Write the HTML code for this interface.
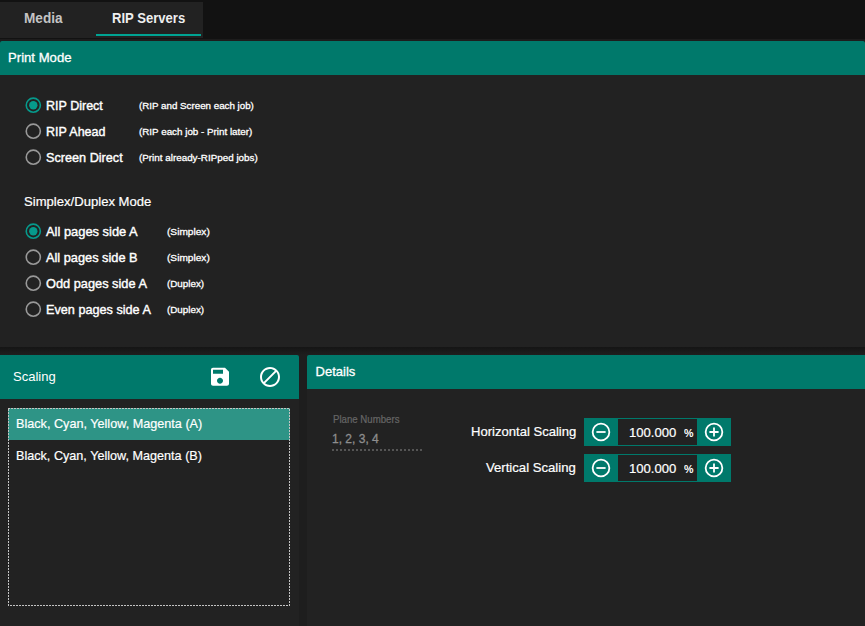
<!DOCTYPE html>
<html><head><meta charset="utf-8">
<style>
*{box-sizing:border-box;margin:0;padding:0}
html,body{width:865px;height:626px;overflow:hidden;background:#121212;font-family:"Liberation Sans",sans-serif;color:#fff}
.a{position:absolute}
.t,.tab{position:absolute;white-space:nowrap;color:#fff}
.m{-webkit-text-stroke-width:0.4px}
.m3{-webkit-text-stroke-width:0.3px}
.m2{-webkit-text-stroke-width:0.2px}
.teal{background:#00796b}
</style></head><body>
<div class="a" style="left:0;top:355px;width:865px;height:271px;background:#1e1e1e"></div>
<div class="a" style="left:0;top:2px;width:203px;height:36px;background:#222"></div>
<div class="a" style="left:96px;top:34px;width:105px;height:2px;background:#00a393"></div>
<div class="a" style="left:0;top:39px;width:865px;height:2px;background:#1d1c1c"></div>
<div class="a" style="left:0;top:347px;width:865px;height:8px;background:linear-gradient(#151515,#1e1e1e)"></div>
<div class="a" style="left:0;top:41px;width:865px;height:306px;background:#222;border-radius:2px 2px 0 0"></div>
<div class="a teal" style="left:0;top:41px;width:865px;height:34px;border-radius:2px 2px 0 0"></div>
<div class="a" style="left:0;top:355px;width:299px;height:271px;background:#222;border-radius:0 2px 0 0"></div>
<div class="a teal" style="left:0;top:355px;width:299px;height:44px;border-radius:0 2px 0 0"></div>
<div class="a" style="left:307px;top:355px;width:558px;height:271px;background:#222;border-radius:2px 0 0 0"></div>
<div class="a teal" style="left:307px;top:355px;width:558px;height:34px;border-radius:2px 0 0 0"></div>
<div class="a" style="left:8px;top:408px;width:282px;height:32px;background:#2e9486"></div>
<div class="a" style="left:8px;top:408px;width:282px;height:1px;background:repeating-linear-gradient(90deg,#c4c4c4 0 2px,transparent 2px 3px)"></div>
<div class="a" style="left:8px;top:605px;width:282px;height:1px;background:repeating-linear-gradient(90deg,#c4c4c4 0 1px,transparent 1px 2px,#c4c4c4 2px 3px)"></div>
<div class="a" style="left:8px;top:408px;width:1px;height:198px;background:repeating-linear-gradient(180deg,transparent 0 1px,#c4c4c4 1px 3px)"></div>
<div class="a" style="left:289px;top:408px;width:1px;height:198px;background:repeating-linear-gradient(180deg,transparent 0 1px,#c4c4c4 1px 3px)"></div>
<svg class="a" style="left:208px;top:364px" width="24" height="26" viewBox="0 0 24 26"><path fill="#fff" transform="translate(0,0.7)" d="M17 3H5c-1.110 0-2 .9-2 2v14c0 1.100.890 2 2 2h14c1.100 0 2-.9 2-2V7l-4-4zm-5 16c-1.660 0-3-1.340-3-3s1.340-3 3-3 3 1.340 3 3-1.340 3-3 3zm3-10H5V5h10v4z"/></svg>
<svg class="a" style="left:258px;top:365px" width="24" height="24" viewBox="0 0 24 24"><path fill="#fff" d="M12 2C6.480 2 2 6.480 2 12s4.480 10 10 10 10-4.480 10-10S17.520 2 12 2zM4 12c0-4.420 3.580-8 8-8 1.850 0 3.550.63 4.900 1.690L5.690 16.900C4.630 15.550 4 13.850 4 12zm8 8c-1.850 0-3.550-.63-4.900-1.690L18.310 7.100C19.370 8.450 20 10.150 20 12c0 4.420-3.580 8-8 8z"/></svg>
<div class="a" style="left:332px;top:449px;width:90px;height:2px;background:repeating-linear-gradient(90deg,#555 0 2px,transparent 2px 4px)"></div>
<svg class="a" style="left:23px;top:95px" width="20" height="20" viewBox="0 0 20 20"><circle cx="10.30" cy="10.20" r="7.050" fill="none" stroke="#069a8c" stroke-width="1.600"/><circle cx="10.30" cy="10.20" r="4.200" fill="#069a8c"/></svg>
<svg class="a" style="left:23px;top:121px" width="20" height="20" viewBox="0 0 20 20"><circle cx="10.30" cy="10.20" r="7.050" fill="none" stroke="#999" stroke-width="1.600"/></svg>
<svg class="a" style="left:23px;top:147px" width="20" height="20" viewBox="0 0 20 20"><circle cx="10.30" cy="10.20" r="7.050" fill="none" stroke="#999" stroke-width="1.600"/></svg>
<svg class="a" style="left:23px;top:221px" width="20" height="20" viewBox="0 0 20 20"><circle cx="10.30" cy="10.20" r="7.050" fill="none" stroke="#069a8c" stroke-width="1.600"/><circle cx="10.30" cy="10.20" r="4.200" fill="#069a8c"/></svg>
<svg class="a" style="left:23px;top:247px" width="20" height="20" viewBox="0 0 20 20"><circle cx="10.30" cy="10.20" r="7.050" fill="none" stroke="#999" stroke-width="1.600"/></svg>
<svg class="a" style="left:23px;top:273px" width="20" height="20" viewBox="0 0 20 20"><circle cx="10.30" cy="10.20" r="7.050" fill="none" stroke="#999" stroke-width="1.600"/></svg>
<svg class="a" style="left:23px;top:299px" width="20" height="20" viewBox="0 0 20 20"><circle cx="10.30" cy="10.20" r="7.050" fill="none" stroke="#999" stroke-width="1.600"/></svg>
<div class="a" style="left:584px;top:418px;width:147px;height:28px;background:#00796b"></div><div class="a" style="left:618px;top:419px;width:79px;height:26px;background:#222"></div><svg class="a" style="left:589px;top:420px" width="24" height="24" viewBox="0 0 24 24"><circle cx="12" cy="12" r="8.350" fill="none" stroke="#fff" stroke-width="1.800"/><path d="M7.400 12h9.200" stroke="#fff" stroke-width="1.800" fill="none"/></svg><svg class="a" style="left:702px;top:420px" width="24" height="24" viewBox="0 0 24 24"><circle cx="12" cy="12" r="8.350" fill="none" stroke="#fff" stroke-width="1.800"/><path d="M7.400 12h9.200M12 7.400v9.200" stroke="#fff" stroke-width="1.800" fill="none"/></svg>
<div class="a" style="left:584px;top:454px;width:147px;height:28px;background:#00796b"></div><div class="a" style="left:618px;top:455px;width:79px;height:26px;background:#222"></div><svg class="a" style="left:589px;top:456px" width="24" height="24" viewBox="0 0 24 24"><circle cx="12" cy="12" r="8.350" fill="none" stroke="#fff" stroke-width="1.800"/><path d="M7.400 12h9.200" stroke="#fff" stroke-width="1.800" fill="none"/></svg><svg class="a" style="left:702px;top:456px" width="24" height="24" viewBox="0 0 24 24"><circle cx="12" cy="12" r="8.350" fill="none" stroke="#fff" stroke-width="1.800"/><path d="M7.400 12h9.200M12 7.400v9.200" stroke="#fff" stroke-width="1.800" fill="none"/></svg>
<div id="t1" class="tab" style="left:23.56px;top:10px;font-size:14px;line-height:16px;transform:scaleX(0.9719);transform-origin:0 0;color:#c4c4c4;font-weight:bold">Media</div>
<div id="t2" class="tab" style="left:111.50px;top:10px;font-size:14px;line-height:16px;transform:scaleX(0.9339);transform-origin:0 0;color:#eee;font-weight:bold">RIP Servers</div>
<div id="h1" class="t m3" style="left:7.63px;top:50px;font-size:13px;line-height:15px;transform:scaleX(1.0101);transform-origin:0 0;">Print Mode</div>
<div id="a1" class="t m" style="left:45.52px;top:98px;font-size:13px;line-height:15px;transform:scaleX(0.9635);transform-origin:0 0;">RIP Direct</div>
<div id="a2" class="t m" style="left:45.50px;top:124px;font-size:13px;line-height:15px;transform:scaleX(0.9596);transform-origin:0 0;">RIP Ahead</div>
<div id="a3" class="t m" style="left:45.53px;top:150px;font-size:13px;line-height:15px;transform:scaleX(0.9740);transform-origin:0 0;">Screen Direct</div>
<div id="s1" class="t m3" style="left:138.55px;top:100px;font-size:9.5px;line-height:11px;transform:scaleX(1.0277);transform-origin:0 0;">(RIP and Screen each job)</div>
<div id="s2" class="t m3" style="left:138.55px;top:126px;font-size:9.5px;line-height:11px;transform:scaleX(1.0333);transform-origin:0 0;">(RIP each job - Print later)</div>
<div id="s3" class="t m3" style="left:138.55px;top:152px;font-size:9.5px;line-height:11px;transform:scaleX(1.0363);transform-origin:0 0;">(Print already-RIPped jobs)</div>
<div id="h2" class="t m2" style="left:23.50px;top:194px;font-size:13px;line-height:15px;transform:scaleX(1.0072);transform-origin:0 0;">Simplex/Duplex Mode</div>
<div id="b1" class="t m" style="left:45.74px;top:224px;font-size:13px;line-height:15px;transform:scaleX(0.9913);transform-origin:0 0;">All pages side A</div>
<div id="b2" class="t m" style="left:45.74px;top:250px;font-size:13px;line-height:15px;transform:scaleX(0.9827);transform-origin:0 0;">All pages side B</div>
<div id="b3" class="t m" style="left:45.57px;top:276px;font-size:13px;line-height:15px;transform:scaleX(0.9833);transform-origin:0 0;">Odd pages side A</div>
<div id="b4" class="t m" style="left:45.78px;top:302px;font-size:13px;line-height:15px;transform:scaleX(0.9739);transform-origin:0 0;">Even pages side A</div>
<div id="u1" class="t m3" style="left:166.57px;top:226px;font-size:9.5px;line-height:11px;transform:scaleX(1.0662);transform-origin:0 0;">(Simplex)</div>
<div id="u2" class="t m3" style="left:166.57px;top:252px;font-size:9.5px;line-height:11px;transform:scaleX(1.0662);transform-origin:0 0;">(Simplex)</div>
<div id="u3" class="t m3" style="left:166.70px;top:278px;font-size:9.5px;line-height:11px;transform:scaleX(1.0336);transform-origin:0 0;">(Duplex)</div>
<div id="u4" class="t m3" style="left:166.70px;top:304px;font-size:9.5px;line-height:11px;transform:scaleX(1.0336);transform-origin:0 0;">(Duplex)</div>
<div id="h3" class="t" style="left:12.60px;top:369px;font-size:13px;line-height:15px;transform:scaleX(1.0028);transform-origin:0 0;">Scaling</div>
<div id="r1" class="t m2" style="left:15.66px;top:416px;font-size:13px;line-height:15px;transform:scaleX(0.9726);transform-origin:0 0;">Black, Cyan, Yellow, Magenta (A)</div>
<div id="r2" class="t m2" style="left:15.56px;top:448px;font-size:13px;line-height:15px;transform:scaleX(0.9711);transform-origin:0 0;">Black, Cyan, Yellow, Magenta (B)</div>
<div id="h4" class="t m3" style="left:315.58px;top:364px;font-size:13px;line-height:15px;transform:scaleX(1.0000);transform-origin:0 0;">Details</div>
<div id="pn" class="t m2" style="left:332.74px;top:414px;font-size:10px;line-height:11px;transform:scaleX(0.9647);transform-origin:0 0;color:#666">Plane Numbers</div>
<div id="pv" class="t m3" style="left:331.57px;top:431px;font-size:13px;line-height:15px;transform:scaleX(0.9251);transform-origin:0 0;color:#8e8e8e">1, 2, 3, 4</div>
<div id="l1" class="t m2" style="left:470.60px;top:424px;font-size:13px;line-height:15px;transform:scaleX(1.0047);transform-origin:0 0;">Horizontal Scaling</div>
<div id="l2" class="t m2" style="left:485.56px;top:460px;font-size:13px;line-height:15px;transform:scaleX(1.0105);transform-origin:0 0;">Vertical Scaling</div>
<div id="v1" class="t m2" style="left:628.70px;top:425px;font-size:13px;line-height:15px;transform:scaleX(1.0080);transform-origin:0 0;">100.000</div>
<div id="c1" class="t" style="left:683.72px;top:427px;font-size:11px;line-height:12px;transform:scaleX(0.9710);transform-origin:0 0;font-weight:bold">%</div>
<div id="v2" class="t m2" style="left:628.70px;top:461px;font-size:13px;line-height:15px;transform:scaleX(1.0080);transform-origin:0 0;">100.000</div>
<div id="c2" class="t" style="left:683.72px;top:463px;font-size:11px;line-height:12px;transform:scaleX(0.9710);transform-origin:0 0;font-weight:bold">%</div>
</body></html>
